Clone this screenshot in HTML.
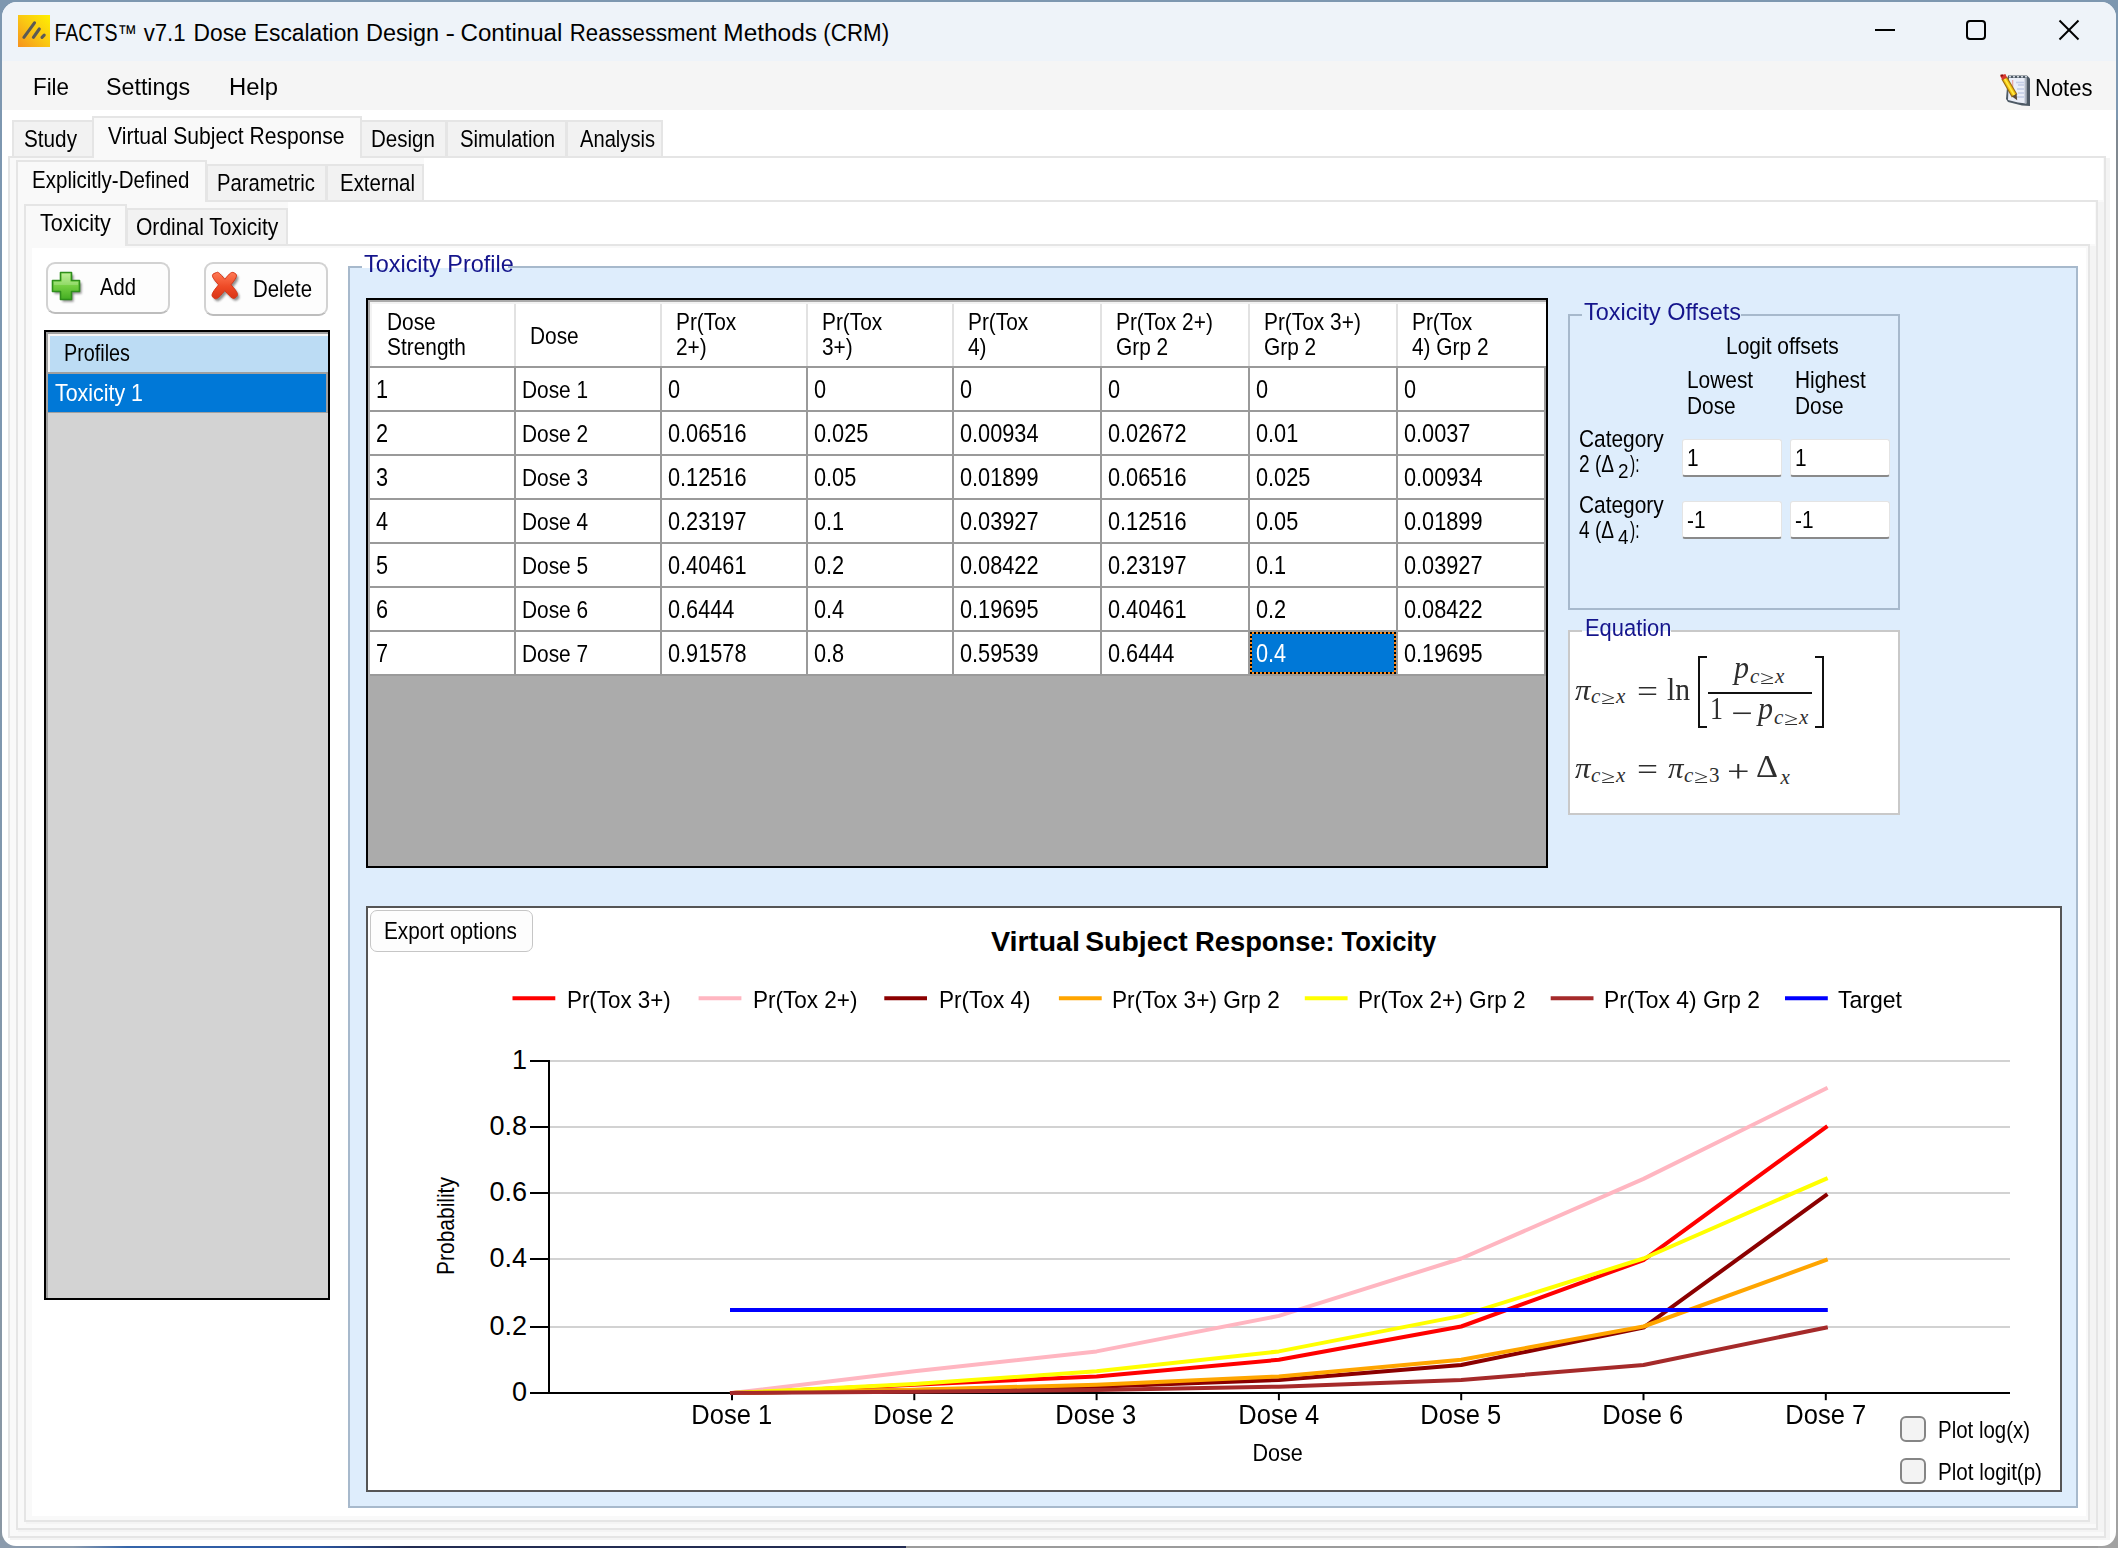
<!DOCTYPE html>
<html><head><meta charset="utf-8"><title>FACTS v7.1 Dose Escalation Design - Continual Reassessment Methods (CRM)</title>
<style>
html,body{margin:0;padding:0;}
body{width:2118px;height:1548px;position:relative;overflow:hidden;background:#7f98b0;font-family:"Liberation Sans",sans-serif;}
.r{position:absolute;box-sizing:border-box;}
.t{position:absolute;white-space:pre;line-height:1;display:block;color:#000;}
svg{position:absolute;overflow:visible;}
.m{font-family:"Liberation Serif","DejaVu Serif",serif;}
</style></head><body>
<div class="r" style="left:0;top:0;width:2118px;height:1548px;background:linear-gradient(180deg,#7d97b0 0,#7d97b0 40%,#8a97a3 100%);"></div>
<div class="r" style="left:0;top:1540px;width:910px;height:8px;background:linear-gradient(90deg,#8b9bad 0,#8b9bad 8%,#3565aa 14%,#2a55a0 35%,#232c52 45%,#232c52 100%);"></div>
<div class="r" style="left:906px;top:1540px;width:1212px;height:8px;background:#9b9b9b;"></div>
<div class="r" style="left:2098px;top:120px;width:20px;height:1428px;background:linear-gradient(180deg,#7d8791 0,#8c8c8c 10%,#a2a2a2 100%);"></div>
<div class="r win" style="left:2px;top:2px;width:2114px;height:1544px;background:#fff;border-radius:15px 15px 14px 14px;overflow:hidden;"></div>
<div class="r " style="left:2px;top:2px;width:2114px;height:60px;background:#eef3f9;border-radius:15px 15px 0 0;"></div>
<div class="r " style="left:2px;top:61px;width:2114px;height:49px;background:#f5f5f5;"></div>
<svg style="left:18px;top:15px" width="32" height="32" viewBox="0 0 32 32">
<defs><linearGradient id="ig" x1="1" y1="0" x2="0" y2="1"><stop offset="0" stop-color="#fff000"/><stop offset="0.5" stop-color="#fac713"/><stop offset="1" stop-color="#f6921e"/></linearGradient></defs>
<rect width="32" height="32" fill="url(#ig)"/>
<g stroke="#5c5a55" stroke-width="3.1" stroke-linecap="round"><line x1="5.9" y1="22.3" x2="16.5" y2="7.8"/><line x1="15.4" y1="22.3" x2="21.3" y2="14"/><line x1="24" y1="22.3" x2="26.2" y2="20.1"/></g>
</svg>
<svg style="left:0;top:0" width="2118" height="1548"><text y="40.8" font-size="23" font-family="Liberation Sans, sans-serif" fill="#000"><tspan x="54.4" textLength="82.8" lengthAdjust="spacingAndGlyphs">FACTS™</tspan> <tspan x="143.7" textLength="41.9" lengthAdjust="spacingAndGlyphs">v7.1</tspan> <tspan x="193.6" textLength="53.2" lengthAdjust="spacingAndGlyphs">Dose</tspan> <tspan x="253.8" textLength="105.2" lengthAdjust="spacingAndGlyphs">Escalation</tspan> <tspan x="366.0" textLength="73.0" lengthAdjust="spacingAndGlyphs">Design</tspan> <tspan x="445.5" textLength="9.5" lengthAdjust="spacingAndGlyphs">-</tspan> <tspan x="460.5" textLength="101.9" lengthAdjust="spacingAndGlyphs">Continual</tspan> <tspan x="569.8" textLength="146.6" lengthAdjust="spacingAndGlyphs">Reassessment</tspan> <tspan x="723.3" textLength="93.7" lengthAdjust="spacingAndGlyphs">Methods</tspan> <tspan x="823.3" textLength="65.8" lengthAdjust="spacingAndGlyphs">(CRM)</tspan></text></svg>
<svg style="left:1860px;top:10px" width="240" height="44" viewBox="0 0 240 44" fill="none" stroke="#000" stroke-width="2">
<line x1="15" y1="20" x2="35" y2="20"/>
<rect x="107" y="11" width="18" height="18" rx="3"/>
<line x1="199.5" y1="10.5" x2="218.5" y2="29.5"/><line x1="218.5" y1="10.5" x2="199.5" y2="29.5"/>
</svg>
<span class="t " style="left:32.5px;top:74.9px;font-size:24.5px;transform:scaleX(0.912);transform-origin:0 0;">File</span>
<span class="t " style="left:106.0px;top:74.9px;font-size:24.5px;transform:scaleX(0.949);transform-origin:0 0;">Settings</span>
<span class="t " style="left:228.5px;top:74.9px;font-size:24.5px;transform:scaleX(0.973);transform-origin:0 0;">Help</span>
<svg style="left:2000px;top:74px" width="30" height="32" viewBox="0 0 30 32">
<path d="M8 1.5 L27 1.5 L30 4.5 L30 32 L22 31.5 L8 28 L6 25 Z" fill="#4e5a66"/>
<path d="M9 4 L26.4 4 L26.4 29.4 L18 28.4 L8 26 Z" fill="#eaeef8"/>
<path d="M24.6 4 L26.4 4 L26.4 29.4 L24.6 29.2 Z" fill="#aeb6c4"/>
<line x1="9" y1="2.7" x2="28" y2="2.7" stroke="#cfd6de" stroke-width="1.6" stroke-dasharray="2 2"/>
<g stroke="#c3cde6" stroke-width="1.6"><line x1="16" y1="8.5" x2="24" y2="8.5"/><line x1="18" y1="11" x2="24" y2="11"/><line x1="17" y1="15" x2="24" y2="15"/><line x1="18" y1="19" x2="24" y2="19"/><line x1="17" y1="23" x2="24" y2="23"/></g>
<line x1="12.6" y1="6" x2="12.6" y2="14" stroke="#eaa9a9" stroke-width="1.4"/>
<path d="M2.2 5.6 L6.8 3.2 L16.6 20 L12 22.6 Z" fill="#f6c60c" stroke="#9c6f16" stroke-width="1.2"/>
<path d="M4.6 4.6 L14.4 21.4" stroke="#ffe94a" stroke-width="1.6"/>
<path d="M0 1.6 L5.4 0 L7 3.4 L2.2 5.8 Z" fill="#d8382f"/>
<path d="M0.4 0.8 L2.6 0.2 L3.4 2 L1.2 2.8 Z" fill="#8a1010"/>
<path d="M12 22.6 L16.6 20 L17.2 26.2 Z" fill="#5b4a36"/>
</svg>
<span class="t " style="left:2035.0px;top:75.8px;font-size:24.5px;transform:scaleX(0.898);transform-origin:0 0;">Notes</span>
<div class="r " style="left:10px;top:158px;width:2100px;height:1382px;background:#f4f4f4;"></div>
<div class="r " style="left:8px;top:156px;width:2098px;height:1382px;background:#f9f9f9;border:2px solid #e5e5e5;"></div>
<div class="r " style="left:424px;top:158px;width:1679px;height:42px;background:#fff;"></div>
<div class="r " style="left:12px;top:120px;width:82px;height:36px;background:#f2f2f2;border:2px solid #e5e5e5;border-bottom:none;"></div>
<div class="r " style="left:360px;top:120px;width:87px;height:36px;background:#f2f2f2;border:2px solid #e5e5e5;border-bottom:none;"></div>
<div class="r " style="left:446px;top:120px;width:121px;height:36px;background:#f2f2f2;border:2px solid #e5e5e5;border-bottom:none;"></div>
<div class="r " style="left:566px;top:120px;width:97px;height:36px;background:#f2f2f2;border:2px solid #e5e5e5;border-bottom:none;"></div>
<div class="r " style="left:92px;top:116px;width:270px;height:42px;background:#f9f9f9;border:2px solid #e5e5e5;border-bottom:none;"></div>
<span class="t " style="left:24.0px;top:127.2px;font-size:24.5px;transform:scaleX(0.846);transform-origin:0 0;">Study</span>
<span class="t " style="left:108.4px;top:123.6px;font-size:24.5px;transform:scaleX(0.861);transform-origin:0 0;">Virtual Subject Response</span>
<span class="t " style="left:370.5px;top:127.2px;font-size:24.5px;transform:scaleX(0.839);transform-origin:0 0;">Design</span>
<span class="t " style="left:460.0px;top:127.2px;font-size:24.5px;transform:scaleX(0.831);transform-origin:0 0;">Simulation</span>
<span class="t " style="left:580.0px;top:127.2px;font-size:24.5px;transform:scaleX(0.822);transform-origin:0 0;">Analysis</span>
<div class="r " style="left:18px;top:202px;width:2086px;height:1330px;background:#f4f4f4;"></div>
<div class="r " style="left:16px;top:200px;width:2082px;height:1330px;background:#f9f9f9;border:2px solid #e5e5e5;"></div>
<div class="r " style="left:288px;top:202px;width:1807px;height:42px;background:#fff;"></div>
<div class="r " style="left:206px;top:164px;width:121px;height:36px;background:#f2f2f2;border:2px solid #e5e5e5;border-bottom:none;"></div>
<div class="r " style="left:326px;top:164px;width:98px;height:36px;background:#f2f2f2;border:2px solid #e5e5e5;border-bottom:none;"></div>
<div class="r " style="left:16px;top:160px;width:191px;height:42px;background:#f9f9f9;border:2px solid #e5e5e5;border-bottom:none;"></div>
<span class="t " style="left:32.3px;top:167.5px;font-size:24.5px;transform:scaleX(0.838);transform-origin:0 0;">Explicitly-Defined</span>
<span class="t " style="left:216.5px;top:171.3px;font-size:24.5px;transform:scaleX(0.827);transform-origin:0 0;">Parametric</span>
<span class="t " style="left:340.0px;top:171.3px;font-size:24.5px;transform:scaleX(0.834);transform-origin:0 0;">External</span>
<div class="r " style="left:26px;top:246px;width:2070px;height:1278px;background:#f4f4f4;"></div>
<div class="r " style="left:24px;top:244px;width:2066px;height:1278px;background:#f9f9f9;border:2px solid #e5e5e5;"></div>
<div class="r " style="left:126px;top:208px;width:162px;height:36px;background:#f2f2f2;border:2px solid #e5e5e5;border-bottom:none;"></div>
<div class="r " style="left:24px;top:204px;width:103px;height:42px;background:#f9f9f9;border:2px solid #e5e5e5;border-bottom:none;"></div>
<span class="t " style="left:40.4px;top:211.4px;font-size:24.5px;transform:scaleX(0.882);transform-origin:0 0;">Toxicity</span>
<span class="t " style="left:136.0px;top:215.3px;font-size:24.5px;transform:scaleX(0.859);transform-origin:0 0;">Ordinal Toxicity</span>
<div class="r " style="left:32px;top:248px;width:2054px;height:1268px;background:#fff;"></div>
<div class="r " style="left:46px;top:262px;width:124px;height:52px;background:#fdfdfd;border:2px solid #d2d2d2;border-radius:9px;border-bottom-color:#bdbdbd;"></div>
<div class="r " style="left:204px;top:262px;width:124px;height:54px;background:#fdfdfd;border:2px solid #d2d2d2;border-radius:9px;border-bottom-color:#bdbdbd;"></div>
<svg style="left:51px;top:271px" width="34" height="34" viewBox="-1 -1 34 34">
<defs><linearGradient id="gp" x1="0" y1="0" x2="0" y2="1"><stop offset="0" stop-color="#b4ee86"/><stop offset="0.5" stop-color="#74cf42"/><stop offset="1" stop-color="#43ad22"/></linearGradient>
<filter id="sh" x="-20%" y="-20%" width="150%" height="150%"><feGaussianBlur stdDeviation="0.9"/></filter></defs>
<path d="M8.5 0.5 H19.5 V8.5 H27.5 V19.5 H19.5 V27.5 H8.5 V19.5 H0.5 V8.5 H8.5 Z" fill="#333" opacity="0.55" transform="translate(2,2.2)" filter="url(#sh)"/>
<path d="M8.5 0.5 H19.5 V8.5 H27.5 V19.5 H19.5 V27.5 H8.5 V19.5 H0.5 V8.5 H8.5 Z" fill="url(#gp)" stroke="#2f8f1c" stroke-width="1.6" stroke-linejoin="round"/>
<path d="M10 2 H18 V10 H26 V13 H2 V10 H10 Z" fill="#fff" opacity="0.18"/>
</svg>
<svg style="left:208px;top:269px" width="38" height="38" viewBox="-2 -2 38 38">
<defs><linearGradient id="rx" x1="0" y1="0" x2="0" y2="1"><stop offset="0" stop-color="#ff7a55"/><stop offset="0.55" stop-color="#ee4a26"/><stop offset="1" stop-color="#d93416"/></linearGradient></defs>
<g transform="translate(2,2.4)" opacity="0.5" filter="url(#sh)"><path d="M6.5 1.5 C8 0.5 9.5 2 14.8 8.2 C20 2 21.5 0.5 24 1.8 C27.5 3.5 28 5 21 13.8 C28.5 22 28.5 24 26 26.2 C23.5 28.5 22 28 14.8 19.6 C8 28 6 29 3.5 26.8 C1 24.5 1 23 8.6 13.8 C1.5 6 1.5 4 3.8 2.6 Z" fill="#222"/></g>
<path d="M6.5 1.5 C8 0.5 9.5 2 14.8 8.2 C20 2 21.5 0.5 24 1.8 C27.5 3.5 28 5 21 13.8 C28.5 22 28.5 24 26 26.2 C23.5 28.5 22 28 14.8 19.6 C8 28 6 29 3.5 26.8 C1 24.5 1 23 8.6 13.8 C1.5 6 1.5 4 3.8 2.6 Z" fill="url(#rx)" stroke="#d6381a" stroke-width="1"/>
</svg>
<span class="t " style="left:100.3px;top:275.2px;font-size:24.5px;transform:scaleX(0.826);transform-origin:0 0;">Add</span>
<span class="t " style="left:253.0px;top:277.1px;font-size:24.5px;transform:scaleX(0.833);transform-origin:0 0;">Delete</span>
<div class="r " style="left:44px;top:330px;width:286px;height:970px;background:#d3d3d3;border:2px solid #000;"></div>
<div class="r " style="left:46px;top:332px;width:282px;height:966px;border:2px solid #a0a0a0;border-right:none;border-bottom:none;"></div>
<div class="r " style="left:48px;top:334px;width:280px;height:38px;background:#f7f6f5;"></div>
<div class="r " style="left:50px;top:336px;width:278px;height:36px;background:#bcdcf4;"></div>
<div class="r " style="left:48px;top:374px;width:278px;height:38px;background:#0078d7;"></div>
<div class="r " style="left:48px;top:372px;width:280px;height:2px;background:#a0a0a0;"></div>
<div class="r " style="left:326px;top:374px;width:2px;height:38px;background:#a0a0a0;"></div>
<div class="r " style="left:48px;top:412px;width:280px;height:1px;background:#a0a0a0;"></div>
<span class="t " style="left:64.4px;top:341.3px;font-size:24.5px;transform:scaleX(0.808);transform-origin:0 0;">Profiles</span>
<span class="t " style="left:55.0px;top:381.4px;font-size:24.5px;transform:scaleX(0.873);transform-origin:0 0;color:#fff;">Toxicity 1</span>
<div class="r " style="left:348px;top:266px;width:1730px;height:1242px;background:#deedfc;border:2px solid #a7b9cc;"></div>
<div class="r " style="left:362px;top:255px;width:146px;height:13px;background:#fff;"></div>
<div class="r " style="left:362px;top:268px;width:146px;height:13px;background:#deedfc;"></div>
<span class="t " style="left:364.4px;top:251.5px;font-size:24.5px;transform:scaleX(0.956);transform-origin:0 0;color:#15158c;">Toxicity Profile</span>
<div class="r " style="left:366px;top:298px;width:1182px;height:570px;background:#ababab;border:2px solid #000;"></div>
<div class="r " style="left:370px;top:302px;width:1176px;height:373px;background:#fff;"></div>
<div class="r " style="left:370px;top:302px;width:1176px;height:2px;background:#f3f3f3;"></div>
<div class="r " style="left:370px;top:302px;width:2px;height:64px;background:#f3f3f3;"></div>
<div class="r " style="left:514px;top:304px;width:2px;height:62px;background:#e2e2e2;"></div>
<div class="r " style="left:660px;top:304px;width:2px;height:62px;background:#e2e2e2;"></div>
<div class="r " style="left:806px;top:304px;width:2px;height:62px;background:#e2e2e2;"></div>
<div class="r " style="left:952px;top:304px;width:2px;height:62px;background:#e2e2e2;"></div>
<div class="r " style="left:1100px;top:304px;width:2px;height:62px;background:#e2e2e2;"></div>
<div class="r " style="left:1248px;top:304px;width:2px;height:62px;background:#e2e2e2;"></div>
<div class="r " style="left:1396px;top:304px;width:2px;height:62px;background:#e2e2e2;"></div>
<div class="r " style="left:370px;top:366px;width:1176px;height:2px;background:#9a9a9a;"></div>
<div class="r " style="left:370px;top:410px;width:1176px;height:2px;background:#9a9a9a;"></div>
<div class="r " style="left:370px;top:454px;width:1176px;height:2px;background:#9a9a9a;"></div>
<div class="r " style="left:370px;top:498px;width:1176px;height:2px;background:#9a9a9a;"></div>
<div class="r " style="left:370px;top:542px;width:1176px;height:2px;background:#9a9a9a;"></div>
<div class="r " style="left:370px;top:586px;width:1176px;height:2px;background:#9a9a9a;"></div>
<div class="r " style="left:370px;top:630px;width:1176px;height:2px;background:#9a9a9a;"></div>
<div class="r " style="left:370px;top:674px;width:1176px;height:2px;background:#9a9a9a;"></div>
<div class="r " style="left:514px;top:366px;width:2px;height:309px;background:#9a9a9a;"></div>
<div class="r " style="left:660px;top:366px;width:2px;height:309px;background:#9a9a9a;"></div>
<div class="r " style="left:806px;top:366px;width:2px;height:309px;background:#9a9a9a;"></div>
<div class="r " style="left:952px;top:366px;width:2px;height:309px;background:#9a9a9a;"></div>
<div class="r " style="left:1100px;top:366px;width:2px;height:309px;background:#9a9a9a;"></div>
<div class="r " style="left:1248px;top:366px;width:2px;height:309px;background:#9a9a9a;"></div>
<div class="r " style="left:1396px;top:366px;width:2px;height:309px;background:#9a9a9a;"></div>
<div class="r " style="left:1544px;top:366px;width:2px;height:309px;background:#9a9a9a;"></div>
<span class="t " style="left:386.5px;top:309.6px;font-size:24.5px;transform:scaleX(0.852);transform-origin:0 0;">Dose</span>
<span class="t " style="left:386.5px;top:335.4px;font-size:24.5px;transform:scaleX(0.852);transform-origin:0 0;">Strength</span>
<span class="t " style="left:530.0px;top:323.9px;font-size:24.5px;transform:scaleX(0.852);transform-origin:0 0;">Dose</span>
<span class="t " style="left:676.0px;top:309.6px;font-size:24.5px;transform:scaleX(0.852);transform-origin:0 0;">Pr(Tox</span>
<span class="t " style="left:676.0px;top:335.4px;font-size:24.5px;transform:scaleX(0.852);transform-origin:0 0;">2+)</span>
<span class="t " style="left:822.0px;top:309.6px;font-size:24.5px;transform:scaleX(0.852);transform-origin:0 0;">Pr(Tox</span>
<span class="t " style="left:822.0px;top:335.4px;font-size:24.5px;transform:scaleX(0.852);transform-origin:0 0;">3+)</span>
<span class="t " style="left:968.0px;top:309.6px;font-size:24.5px;transform:scaleX(0.852);transform-origin:0 0;">Pr(Tox</span>
<span class="t " style="left:968.0px;top:335.4px;font-size:24.5px;transform:scaleX(0.852);transform-origin:0 0;">4)</span>
<span class="t " style="left:1116.0px;top:309.6px;font-size:24.5px;transform:scaleX(0.852);transform-origin:0 0;">Pr(Tox 2+)</span>
<span class="t " style="left:1116.0px;top:335.4px;font-size:24.5px;transform:scaleX(0.852);transform-origin:0 0;">Grp 2</span>
<span class="t " style="left:1264.0px;top:309.6px;font-size:24.5px;transform:scaleX(0.852);transform-origin:0 0;">Pr(Tox 3+)</span>
<span class="t " style="left:1264.0px;top:335.4px;font-size:24.5px;transform:scaleX(0.852);transform-origin:0 0;">Grp 2</span>
<span class="t " style="left:1412.0px;top:309.6px;font-size:24.5px;transform:scaleX(0.852);transform-origin:0 0;">Pr(Tox</span>
<span class="t " style="left:1412.0px;top:335.4px;font-size:24.5px;transform:scaleX(0.852);transform-origin:0 0;">4) Grp 2</span>
<div class="r " style="left:1250px;top:632px;width:146px;height:42px;background:#0078d7;"></div>
<div class="r " style="left:1250px;top:632px;width:146px;height:2px;background:repeating-linear-gradient(90deg,#000 0,#000 2px,#ff8c1a 2px,#ff8c1a 4px);"></div>
<div class="r " style="left:1250px;top:672px;width:146px;height:2px;background:repeating-linear-gradient(90deg,#000 0,#000 2px,#ff8c1a 2px,#ff8c1a 4px);"></div>
<div class="r " style="left:1250px;top:632px;width:2px;height:42px;background:repeating-linear-gradient(180deg,#000 0,#000 2px,#ff8c1a 2px,#ff8c1a 4px);"></div>
<div class="r " style="left:1394px;top:632px;width:2px;height:42px;background:repeating-linear-gradient(180deg,#000 0,#000 2px,#ff8c1a 2px,#ff8c1a 4px);"></div>
<span class="t " style="left:375.5px;top:377.1px;font-size:25.3px;transform:scaleX(0.858);transform-origin:0 0;">1</span>
<span class="t " style="left:521.5px;top:377.6px;font-size:24.5px;transform:scaleX(0.852);transform-origin:0 0;">Dose 1</span>
<span class="t " style="left:667.5px;top:377.1px;font-size:25.3px;transform:scaleX(0.858);transform-origin:0 0;">0</span>
<span class="t " style="left:813.5px;top:377.1px;font-size:25.3px;transform:scaleX(0.858);transform-origin:0 0;">0</span>
<span class="t " style="left:959.5px;top:377.1px;font-size:25.3px;transform:scaleX(0.858);transform-origin:0 0;">0</span>
<span class="t " style="left:1107.5px;top:377.1px;font-size:25.3px;transform:scaleX(0.858);transform-origin:0 0;">0</span>
<span class="t " style="left:1255.5px;top:377.1px;font-size:25.3px;transform:scaleX(0.858);transform-origin:0 0;">0</span>
<span class="t " style="left:1403.5px;top:377.1px;font-size:25.3px;transform:scaleX(0.858);transform-origin:0 0;">0</span>
<span class="t " style="left:375.5px;top:421.1px;font-size:25.3px;transform:scaleX(0.858);transform-origin:0 0;">2</span>
<span class="t " style="left:521.5px;top:421.6px;font-size:24.5px;transform:scaleX(0.852);transform-origin:0 0;">Dose 2</span>
<span class="t " style="left:667.5px;top:421.1px;font-size:25.3px;transform:scaleX(0.858);transform-origin:0 0;">0.06516</span>
<span class="t " style="left:813.5px;top:421.1px;font-size:25.3px;transform:scaleX(0.858);transform-origin:0 0;">0.025</span>
<span class="t " style="left:959.5px;top:421.1px;font-size:25.3px;transform:scaleX(0.858);transform-origin:0 0;">0.00934</span>
<span class="t " style="left:1107.5px;top:421.1px;font-size:25.3px;transform:scaleX(0.858);transform-origin:0 0;">0.02672</span>
<span class="t " style="left:1255.5px;top:421.1px;font-size:25.3px;transform:scaleX(0.858);transform-origin:0 0;">0.01</span>
<span class="t " style="left:1403.5px;top:421.1px;font-size:25.3px;transform:scaleX(0.858);transform-origin:0 0;">0.0037</span>
<span class="t " style="left:375.5px;top:465.1px;font-size:25.3px;transform:scaleX(0.858);transform-origin:0 0;">3</span>
<span class="t " style="left:521.5px;top:465.6px;font-size:24.5px;transform:scaleX(0.852);transform-origin:0 0;">Dose 3</span>
<span class="t " style="left:667.5px;top:465.1px;font-size:25.3px;transform:scaleX(0.858);transform-origin:0 0;">0.12516</span>
<span class="t " style="left:813.5px;top:465.1px;font-size:25.3px;transform:scaleX(0.858);transform-origin:0 0;">0.05</span>
<span class="t " style="left:959.5px;top:465.1px;font-size:25.3px;transform:scaleX(0.858);transform-origin:0 0;">0.01899</span>
<span class="t " style="left:1107.5px;top:465.1px;font-size:25.3px;transform:scaleX(0.858);transform-origin:0 0;">0.06516</span>
<span class="t " style="left:1255.5px;top:465.1px;font-size:25.3px;transform:scaleX(0.858);transform-origin:0 0;">0.025</span>
<span class="t " style="left:1403.5px;top:465.1px;font-size:25.3px;transform:scaleX(0.858);transform-origin:0 0;">0.00934</span>
<span class="t " style="left:375.5px;top:509.1px;font-size:25.3px;transform:scaleX(0.858);transform-origin:0 0;">4</span>
<span class="t " style="left:521.5px;top:509.6px;font-size:24.5px;transform:scaleX(0.852);transform-origin:0 0;">Dose 4</span>
<span class="t " style="left:667.5px;top:509.1px;font-size:25.3px;transform:scaleX(0.858);transform-origin:0 0;">0.23197</span>
<span class="t " style="left:813.5px;top:509.1px;font-size:25.3px;transform:scaleX(0.858);transform-origin:0 0;">0.1</span>
<span class="t " style="left:959.5px;top:509.1px;font-size:25.3px;transform:scaleX(0.858);transform-origin:0 0;">0.03927</span>
<span class="t " style="left:1107.5px;top:509.1px;font-size:25.3px;transform:scaleX(0.858);transform-origin:0 0;">0.12516</span>
<span class="t " style="left:1255.5px;top:509.1px;font-size:25.3px;transform:scaleX(0.858);transform-origin:0 0;">0.05</span>
<span class="t " style="left:1403.5px;top:509.1px;font-size:25.3px;transform:scaleX(0.858);transform-origin:0 0;">0.01899</span>
<span class="t " style="left:375.5px;top:553.1px;font-size:25.3px;transform:scaleX(0.858);transform-origin:0 0;">5</span>
<span class="t " style="left:521.5px;top:553.6px;font-size:24.5px;transform:scaleX(0.852);transform-origin:0 0;">Dose 5</span>
<span class="t " style="left:667.5px;top:553.1px;font-size:25.3px;transform:scaleX(0.858);transform-origin:0 0;">0.40461</span>
<span class="t " style="left:813.5px;top:553.1px;font-size:25.3px;transform:scaleX(0.858);transform-origin:0 0;">0.2</span>
<span class="t " style="left:959.5px;top:553.1px;font-size:25.3px;transform:scaleX(0.858);transform-origin:0 0;">0.08422</span>
<span class="t " style="left:1107.5px;top:553.1px;font-size:25.3px;transform:scaleX(0.858);transform-origin:0 0;">0.23197</span>
<span class="t " style="left:1255.5px;top:553.1px;font-size:25.3px;transform:scaleX(0.858);transform-origin:0 0;">0.1</span>
<span class="t " style="left:1403.5px;top:553.1px;font-size:25.3px;transform:scaleX(0.858);transform-origin:0 0;">0.03927</span>
<span class="t " style="left:375.5px;top:597.1px;font-size:25.3px;transform:scaleX(0.858);transform-origin:0 0;">6</span>
<span class="t " style="left:521.5px;top:597.6px;font-size:24.5px;transform:scaleX(0.852);transform-origin:0 0;">Dose 6</span>
<span class="t " style="left:667.5px;top:597.1px;font-size:25.3px;transform:scaleX(0.858);transform-origin:0 0;">0.6444</span>
<span class="t " style="left:813.5px;top:597.1px;font-size:25.3px;transform:scaleX(0.858);transform-origin:0 0;">0.4</span>
<span class="t " style="left:959.5px;top:597.1px;font-size:25.3px;transform:scaleX(0.858);transform-origin:0 0;">0.19695</span>
<span class="t " style="left:1107.5px;top:597.1px;font-size:25.3px;transform:scaleX(0.858);transform-origin:0 0;">0.40461</span>
<span class="t " style="left:1255.5px;top:597.1px;font-size:25.3px;transform:scaleX(0.858);transform-origin:0 0;">0.2</span>
<span class="t " style="left:1403.5px;top:597.1px;font-size:25.3px;transform:scaleX(0.858);transform-origin:0 0;">0.08422</span>
<span class="t " style="left:375.5px;top:641.1px;font-size:25.3px;transform:scaleX(0.858);transform-origin:0 0;">7</span>
<span class="t " style="left:521.5px;top:641.6px;font-size:24.5px;transform:scaleX(0.852);transform-origin:0 0;">Dose 7</span>
<span class="t " style="left:667.5px;top:641.1px;font-size:25.3px;transform:scaleX(0.858);transform-origin:0 0;">0.91578</span>
<span class="t " style="left:813.5px;top:641.1px;font-size:25.3px;transform:scaleX(0.858);transform-origin:0 0;">0.8</span>
<span class="t " style="left:959.5px;top:641.1px;font-size:25.3px;transform:scaleX(0.858);transform-origin:0 0;">0.59539</span>
<span class="t " style="left:1107.5px;top:641.1px;font-size:25.3px;transform:scaleX(0.858);transform-origin:0 0;">0.6444</span>
<span class="t " style="left:1255.5px;top:641.1px;font-size:25.3px;transform:scaleX(0.858);transform-origin:0 0;color:#fff;">0.4</span>
<span class="t " style="left:1403.5px;top:641.1px;font-size:25.3px;transform:scaleX(0.858);transform-origin:0 0;">0.19695</span>
<div class="r " style="left:1568px;top:314px;width:332px;height:296px;border:2px solid #a7b9cc;"></div>
<div class="r " style="left:1582px;top:300px;width:159px;height:28px;background:#deedfc;"></div>
<span class="t " style="left:1584.0px;top:299.9px;font-size:24.5px;transform:scaleX(0.956);transform-origin:0 0;color:#15158c;">Toxicity Offsets</span>
<span class="t " style="left:1726.3px;top:333.9px;font-size:24.5px;transform:scaleX(0.856);transform-origin:0 0;">Logit offsets</span>
<span class="t " style="left:1686.8px;top:367.9px;font-size:24.5px;transform:scaleX(0.852);transform-origin:0 0;">Lowest</span>
<span class="t " style="left:1686.8px;top:393.9px;font-size:24.5px;transform:scaleX(0.852);transform-origin:0 0;">Dose</span>
<span class="t " style="left:1794.6px;top:367.9px;font-size:24.5px;transform:scaleX(0.852);transform-origin:0 0;">Highest</span>
<span class="t " style="left:1794.6px;top:393.9px;font-size:24.5px;transform:scaleX(0.852);transform-origin:0 0;">Dose</span>
<span class="t " style="left:1579.4px;top:426.9px;font-size:24.5px;transform:scaleX(0.852);transform-origin:0 0;">Category</span>
<span class="t " style="left:1579.4px;top:452.1px;font-size:24.5px;transform:scaleX(0.778);transform-origin:0 0;">2 (Δ</span>
<span class="t " style="left:1617.5px;top:460.1px;font-size:21px;transform:scaleX(0.900);transform-origin:0 0;">2</span>
<span class="t " style="left:1630.0px;top:452.1px;font-size:24.5px;transform:scaleX(0.635);transform-origin:0 0;">):</span>
<span class="t " style="left:1579.4px;top:492.9px;font-size:24.5px;transform:scaleX(0.852);transform-origin:0 0;">Category</span>
<span class="t " style="left:1579.4px;top:517.6px;font-size:24.5px;transform:scaleX(0.778);transform-origin:0 0;">4 (Δ</span>
<span class="t " style="left:1617.5px;top:525.8px;font-size:21px;transform:scaleX(0.900);transform-origin:0 0;">4</span>
<span class="t " style="left:1630.0px;top:517.6px;font-size:24.5px;transform:scaleX(0.635);transform-origin:0 0;">):</span>
<div class="r " style="left:1682px;top:439px;width:100px;height:38px;background:#fff;border:1.5px solid #e4e4e4;border-bottom:2px solid #8a8a8a;border-radius:3px;"></div>
<span class="t " style="left:1687.0px;top:446.4px;font-size:24.5px;transform:scaleX(0.852);transform-origin:0 0;">1</span>
<div class="r " style="left:1790px;top:439px;width:100px;height:38px;background:#fff;border:1.5px solid #e4e4e4;border-bottom:2px solid #8a8a8a;border-radius:3px;"></div>
<span class="t " style="left:1795.0px;top:446.4px;font-size:24.5px;transform:scaleX(0.852);transform-origin:0 0;">1</span>
<div class="r " style="left:1682px;top:501px;width:100px;height:38px;background:#fff;border:1.5px solid #e4e4e4;border-bottom:2px solid #8a8a8a;border-radius:3px;"></div>
<span class="t " style="left:1687.0px;top:508.4px;font-size:24.5px;transform:scaleX(0.852);transform-origin:0 0;">-1</span>
<div class="r " style="left:1790px;top:501px;width:100px;height:38px;background:#fff;border:1.5px solid #e4e4e4;border-bottom:2px solid #8a8a8a;border-radius:3px;"></div>
<span class="t " style="left:1795.0px;top:508.4px;font-size:24.5px;transform:scaleX(0.852);transform-origin:0 0;">-1</span>
<div class="r " style="left:1568px;top:630px;width:332px;height:185px;background:#fff;border:2px solid #c9c9c9;"></div>
<div class="r " style="left:1582px;top:616px;width:89px;height:15px;background:#deedfc;"></div>
<div class="r " style="left:1582px;top:631px;width:89px;height:13px;background:#fff;"></div>
<span class="t " style="left:1584.5px;top:615.5px;font-size:24.5px;transform:scaleX(0.894);transform-origin:0 0;color:#15158c;">Equation</span>
<span class="t m" style="left:1575.0px;top:674.7px;font-size:30px;transform:scaleX(1.031);transform-origin:0 0;color:#2e2e2e;font-style:italic;">π</span>
<span class="t m" style="left:1591.0px;top:686.4px;font-size:21px;transform:scaleX(1.000);transform-origin:0 0;color:#2e2e2e;font-style:italic;">c</span>
<span class="t m" style="left:1601.0px;top:688.1px;font-size:19px;transform:scaleX(1.342);transform-origin:0 0;color:#2e2e2e;">≥</span>
<span class="t m" style="left:1616.0px;top:686.4px;font-size:21px;transform:scaleX(1.000);transform-origin:0 0;color:#2e2e2e;font-style:italic;">x</span>
<span class="t m" style="left:1637.0px;top:675.2px;font-size:32px;transform:scaleX(1.164);transform-origin:0 0;color:#2e2e2e;">=</span>
<span class="t m" style="left:1667.0px;top:673.8px;font-size:31px;transform:scaleX(0.954);transform-origin:0 0;color:#2e2e2e;">ln</span>
<svg style="left:1696px;top:654px" width="132" height="78" viewBox="0 0 132 78" fill="none" stroke="#111" stroke-width="2"><path d="M11 3 H3 V73 H11"/><path d="M119 3 H127 V73 H119"/><line x1="12" y1="39" x2="116" y2="39"/></svg>
<span class="t m" style="left:1734.0px;top:651.5px;font-size:31px;transform:scaleX(0.968);transform-origin:0 0;color:#2e2e2e;font-style:italic;">p</span>
<span class="t m" style="left:1750.0px;top:665.9px;font-size:21px;transform:scaleX(1.000);transform-origin:0 0;color:#2e2e2e;font-style:italic;">c</span>
<span class="t m" style="left:1760.0px;top:667.6px;font-size:19px;transform:scaleX(1.342);transform-origin:0 0;color:#2e2e2e;">≥</span>
<span class="t m" style="left:1775.0px;top:665.9px;font-size:21px;transform:scaleX(1.000);transform-origin:0 0;color:#2e2e2e;font-style:italic;">x</span>
<span class="t m" style="left:1709.5px;top:693.2px;font-size:31px;transform:scaleX(0.839);transform-origin:0 0;color:#2e2e2e;">1</span>
<span class="t m" style="left:1730.5px;top:697.0px;font-size:32px;transform:scaleX(1.191);transform-origin:0 0;color:#2e2e2e;">−</span>
<span class="t m" style="left:1758.0px;top:693.2px;font-size:31px;transform:scaleX(0.968);transform-origin:0 0;color:#2e2e2e;font-style:italic;">p</span>
<span class="t m" style="left:1774.0px;top:706.9px;font-size:21px;transform:scaleX(1.000);transform-origin:0 0;color:#2e2e2e;font-style:italic;">c</span>
<span class="t m" style="left:1784.0px;top:708.6px;font-size:19px;transform:scaleX(1.342);transform-origin:0 0;color:#2e2e2e;">≥</span>
<span class="t m" style="left:1799.0px;top:706.9px;font-size:21px;transform:scaleX(1.000);transform-origin:0 0;color:#2e2e2e;font-style:italic;">x</span>
<span class="t m" style="left:1575.0px;top:752.5px;font-size:30px;transform:scaleX(1.031);transform-origin:0 0;color:#2e2e2e;font-style:italic;">π</span>
<span class="t m" style="left:1591.0px;top:765.4px;font-size:21px;transform:scaleX(1.000);transform-origin:0 0;color:#2e2e2e;font-style:italic;">c</span>
<span class="t m" style="left:1601.0px;top:767.1px;font-size:19px;transform:scaleX(1.342);transform-origin:0 0;color:#2e2e2e;">≥</span>
<span class="t m" style="left:1616.0px;top:765.4px;font-size:21px;transform:scaleX(1.000);transform-origin:0 0;color:#2e2e2e;font-style:italic;">x</span>
<span class="t m" style="left:1637.0px;top:752.7px;font-size:32px;transform:scaleX(1.164);transform-origin:0 0;color:#2e2e2e;">=</span>
<span class="t m" style="left:1668.0px;top:752.5px;font-size:30px;transform:scaleX(1.031);transform-origin:0 0;color:#2e2e2e;font-style:italic;">π</span>
<span class="t m" style="left:1684.0px;top:765.4px;font-size:21px;transform:scaleX(1.000);transform-origin:0 0;color:#2e2e2e;font-style:italic;">c</span>
<span class="t m" style="left:1694.0px;top:767.1px;font-size:19px;transform:scaleX(1.342);transform-origin:0 0;color:#2e2e2e;">≥</span>
<span class="t m" style="left:1709.0px;top:765.4px;font-size:21px;transform:scaleX(1.000);transform-origin:0 0;color:#2e2e2e;">3</span>
<span class="t m" style="left:1726.5px;top:754.7px;font-size:32px;transform:scaleX(1.247);transform-origin:0 0;color:#2e2e2e;">+</span>
<span class="t m" style="left:1756.0px;top:751.3px;font-size:31px;transform:scaleX(1.104);transform-origin:0 0;color:#2e2e2e;">Δ</span>
<span class="t m" style="left:1780.5px;top:766.9px;font-size:21px;transform:scaleX(1.000);transform-origin:0 0;color:#2e2e2e;font-style:italic;">x</span>
<div class="r " style="left:366px;top:906px;width:1696px;height:586px;background:#fff;border:2px solid #555;"></div>
<div class="r " style="left:370px;top:910px;width:163px;height:42px;background:#fdfdfd;border:1.5px solid #c6c6c6;border-radius:7px;"></div>
<span class="t " style="left:384.0px;top:919.4px;font-size:24.5px;transform:scaleX(0.849);transform-origin:0 0;">Export options</span>
<svg style="left:0;top:0" width="2118" height="1548"><text y="951.2" font-size="27" font-family="Liberation Sans, sans-serif" fill="#000" font-weight="bold"><tspan x="990.9" textLength="89.2" lengthAdjust="spacingAndGlyphs">Virtual</tspan> <tspan x="1085.2" textLength="102.5" lengthAdjust="spacingAndGlyphs">Subject</tspan> <tspan x="1195.1" textLength="139.5" lengthAdjust="spacingAndGlyphs">Response:</tspan> <tspan x="1341.5" textLength="94.8" lengthAdjust="spacingAndGlyphs">Toxicity</tspan></text></svg>
<svg style="left:0;top:0" width="2118" height="1548" viewBox="0 0 2118 1548" fill="none"><line x1="549" y1="1327.0" x2="2010" y2="1327.0" stroke="#d2d2d2" stroke-width="2"/><line x1="549" y1="1259.0" x2="2010" y2="1259.0" stroke="#d2d2d2" stroke-width="2"/><line x1="549" y1="1193.0" x2="2010" y2="1193.0" stroke="#d2d2d2" stroke-width="2"/><line x1="549" y1="1127.0" x2="2010" y2="1127.0" stroke="#d2d2d2" stroke-width="2"/><line x1="549" y1="1061.0" x2="2010" y2="1061.0" stroke="#d2d2d2" stroke-width="2"/><line x1="549" y1="1060" x2="549" y2="1394" stroke="#000" stroke-width="2"/><line x1="530" y1="1393.0" x2="2010" y2="1393.0" stroke="#000" stroke-width="2"/><line x1="530" y1="1327.0" x2="549" y2="1327.0" stroke="#000" stroke-width="2"/><line x1="530" y1="1259.0" x2="549" y2="1259.0" stroke="#000" stroke-width="2"/><line x1="530" y1="1193.0" x2="549" y2="1193.0" stroke="#000" stroke-width="2"/><line x1="530" y1="1127.0" x2="549" y2="1127.0" stroke="#000" stroke-width="2"/><line x1="530" y1="1061.0" x2="549" y2="1061.0" stroke="#000" stroke-width="2"/><line x1="732.0" y1="1393.0" x2="732.0" y2="1400.2" stroke="#000" stroke-width="2"/><line x1="914.3" y1="1393.0" x2="914.3" y2="1400.2" stroke="#000" stroke-width="2"/><line x1="1096.6" y1="1393.0" x2="1096.6" y2="1400.2" stroke="#000" stroke-width="2"/><line x1="1278.9" y1="1393.0" x2="1278.9" y2="1400.2" stroke="#000" stroke-width="2"/><line x1="1461.2" y1="1393.0" x2="1461.2" y2="1400.2" stroke="#000" stroke-width="2"/><line x1="1643.5" y1="1393.0" x2="1643.5" y2="1400.2" stroke="#000" stroke-width="2"/><line x1="1825.8" y1="1393.0" x2="1825.8" y2="1400.2" stroke="#000" stroke-width="2"/><polyline points="732.0,1393.0 914.3,1384.7 1096.6,1376.4 1278.9,1359.8 1461.2,1326.5 1643.5,1260.1 1825.8,1127.2" stroke="#ff0000" stroke-width="4" stroke-linejoin="round" stroke-linecap="square"/><polyline points="732.0,1393.0 914.3,1371.3 1096.6,1351.4 1278.9,1315.9 1461.2,1258.5 1643.5,1178.9 1825.8,1088.7" stroke="#ffb6c1" stroke-width="4" stroke-linejoin="round" stroke-linecap="square"/><polyline points="732.0,1393.0 914.3,1389.9 1096.6,1386.7 1278.9,1380.0 1461.2,1365.0 1643.5,1327.6 1825.8,1195.2" stroke="#8b0000" stroke-width="4" stroke-linejoin="round" stroke-linecap="square"/><polyline points="732.0,1393.0 914.3,1389.7 1096.6,1384.7 1278.9,1376.4 1461.2,1359.8 1643.5,1326.5 1825.8,1260.1" stroke="#ffa500" stroke-width="4" stroke-linejoin="round" stroke-linecap="square"/><polyline points="732.0,1393.0 914.3,1384.1 1096.6,1371.3 1278.9,1351.4 1461.2,1315.9 1643.5,1258.5 1825.8,1178.9" stroke="#ffff00" stroke-width="4" stroke-linejoin="round" stroke-linecap="square"/><polyline points="732.0,1393.0 914.3,1391.8 1096.6,1389.9 1278.9,1386.7 1461.2,1380.0 1643.5,1365.0 1825.8,1327.6" stroke="#a52a2a" stroke-width="4" stroke-linejoin="round" stroke-linecap="square"/><polyline points="732.0,1309.9 914.3,1309.9 1096.6,1309.9 1278.9,1309.9 1461.2,1309.9 1643.5,1309.9 1825.8,1309.9" stroke="#0000ff" stroke-width="4" stroke-linejoin="round" stroke-linecap="square"/><line x1="512.5" y1="998.3" x2="555.3" y2="998.3" stroke="#ff0000" stroke-width="4"/><line x1="698.6" y1="998.3" x2="741.4" y2="998.3" stroke="#ffb6c1" stroke-width="4"/><line x1="884.3" y1="998.3" x2="927" y2="998.3" stroke="#8b0000" stroke-width="4"/><line x1="1058.9" y1="998.3" x2="1101.7" y2="998.3" stroke="#ffa500" stroke-width="4"/><line x1="1304.8" y1="998.3" x2="1347.6" y2="998.3" stroke="#ffff00" stroke-width="4"/><line x1="1550.7" y1="998.3" x2="1593.5" y2="998.3" stroke="#a52a2a" stroke-width="4"/><line x1="1785" y1="998.3" x2="1827.8" y2="998.3" stroke="#0000ff" stroke-width="4"/></svg>
<span class="t " style="left:567.0px;top:988.3px;font-size:24.5px;transform:scaleX(0.913);transform-origin:0 0;">Pr(Tox 3+)</span>
<span class="t " style="left:752.6px;top:988.3px;font-size:24.5px;transform:scaleX(0.919);transform-origin:0 0;">Pr(Tox 2+)</span>
<span class="t " style="left:938.7px;top:988.3px;font-size:24.5px;transform:scaleX(0.921);transform-origin:0 0;">Pr(Tox 4)</span>
<span class="t " style="left:1112.3px;top:988.3px;font-size:24.5px;transform:scaleX(0.923);transform-origin:0 0;">Pr(Tox 3+) Grp 2</span>
<span class="t " style="left:1358.2px;top:988.3px;font-size:24.5px;transform:scaleX(0.922);transform-origin:0 0;">Pr(Tox 2+) Grp 2</span>
<span class="t " style="left:1604.0px;top:988.3px;font-size:24.5px;transform:scaleX(0.932);transform-origin:0 0;">Pr(Tox 4) Grp 2</span>
<span class="t " style="left:1838.4px;top:988.3px;font-size:24.5px;transform:scaleX(0.940);transform-origin:0 0;">Target</span>
<span class="t " style="left:512.0px;top:1379.0px;font-size:27px;transform:scaleX(1.000);transform-origin:100% 0;">0</span>
<span class="t " style="left:489.5px;top:1313.0px;font-size:27px;transform:scaleX(1.000);transform-origin:100% 0;">0.2</span>
<span class="t " style="left:489.5px;top:1245.0px;font-size:27px;transform:scaleX(1.000);transform-origin:100% 0;">0.4</span>
<span class="t " style="left:489.5px;top:1179.0px;font-size:27px;transform:scaleX(1.000);transform-origin:100% 0;">0.6</span>
<span class="t " style="left:489.5px;top:1113.0px;font-size:27px;transform:scaleX(1.000);transform-origin:100% 0;">0.8</span>
<span class="t " style="left:512.0px;top:1047.0px;font-size:27px;transform:scaleX(1.000);transform-origin:100% 0;">1</span>
<span class="t " style="left:688.7px;top:1401.5px;font-size:27px;transform:scaleX(0.945);transform-origin:50% 0;">Dose 1</span>
<span class="t " style="left:871.0px;top:1401.5px;font-size:27px;transform:scaleX(0.945);transform-origin:50% 0;">Dose 2</span>
<span class="t " style="left:1053.3px;top:1401.5px;font-size:27px;transform:scaleX(0.945);transform-origin:50% 0;">Dose 3</span>
<span class="t " style="left:1235.6px;top:1401.5px;font-size:27px;transform:scaleX(0.945);transform-origin:50% 0;">Dose 4</span>
<span class="t " style="left:1417.9px;top:1401.5px;font-size:27px;transform:scaleX(0.945);transform-origin:50% 0;">Dose 5</span>
<span class="t " style="left:1600.2px;top:1401.5px;font-size:27px;transform:scaleX(0.945);transform-origin:50% 0;">Dose 6</span>
<span class="t " style="left:1782.5px;top:1401.5px;font-size:27px;transform:scaleX(0.945);transform-origin:50% 0;">Dose 7</span>
<span class="t " style="left:1249.4px;top:1441.4px;font-size:24.5px;transform:scaleX(0.880);transform-origin:50% 0;">Dose</span>
<span class="t" style="left:445.5px;top:1226px;font-size:24.5px;transform:translate(-50%,-50%) rotate(-90deg) scaleX(.855);transform-origin:50% 50%;">Probability</span>
<div class="r " style="left:1900px;top:1416px;width:26px;height:26px;background:#f3f3f3;border:2px solid #858585;border-radius:6px;"></div>
<div class="r " style="left:1900px;top:1458px;width:26px;height:26px;background:#f3f3f3;border:2px solid #858585;border-radius:6px;"></div>
<span class="t " style="left:1938.4px;top:1417.9px;font-size:24.5px;transform:scaleX(0.834);transform-origin:0 0;">Plot log(x)</span>
<span class="t " style="left:1938.4px;top:1459.6px;font-size:24.5px;transform:scaleX(0.839);transform-origin:0 0;">Plot logit(p)</span>
</body></html>
